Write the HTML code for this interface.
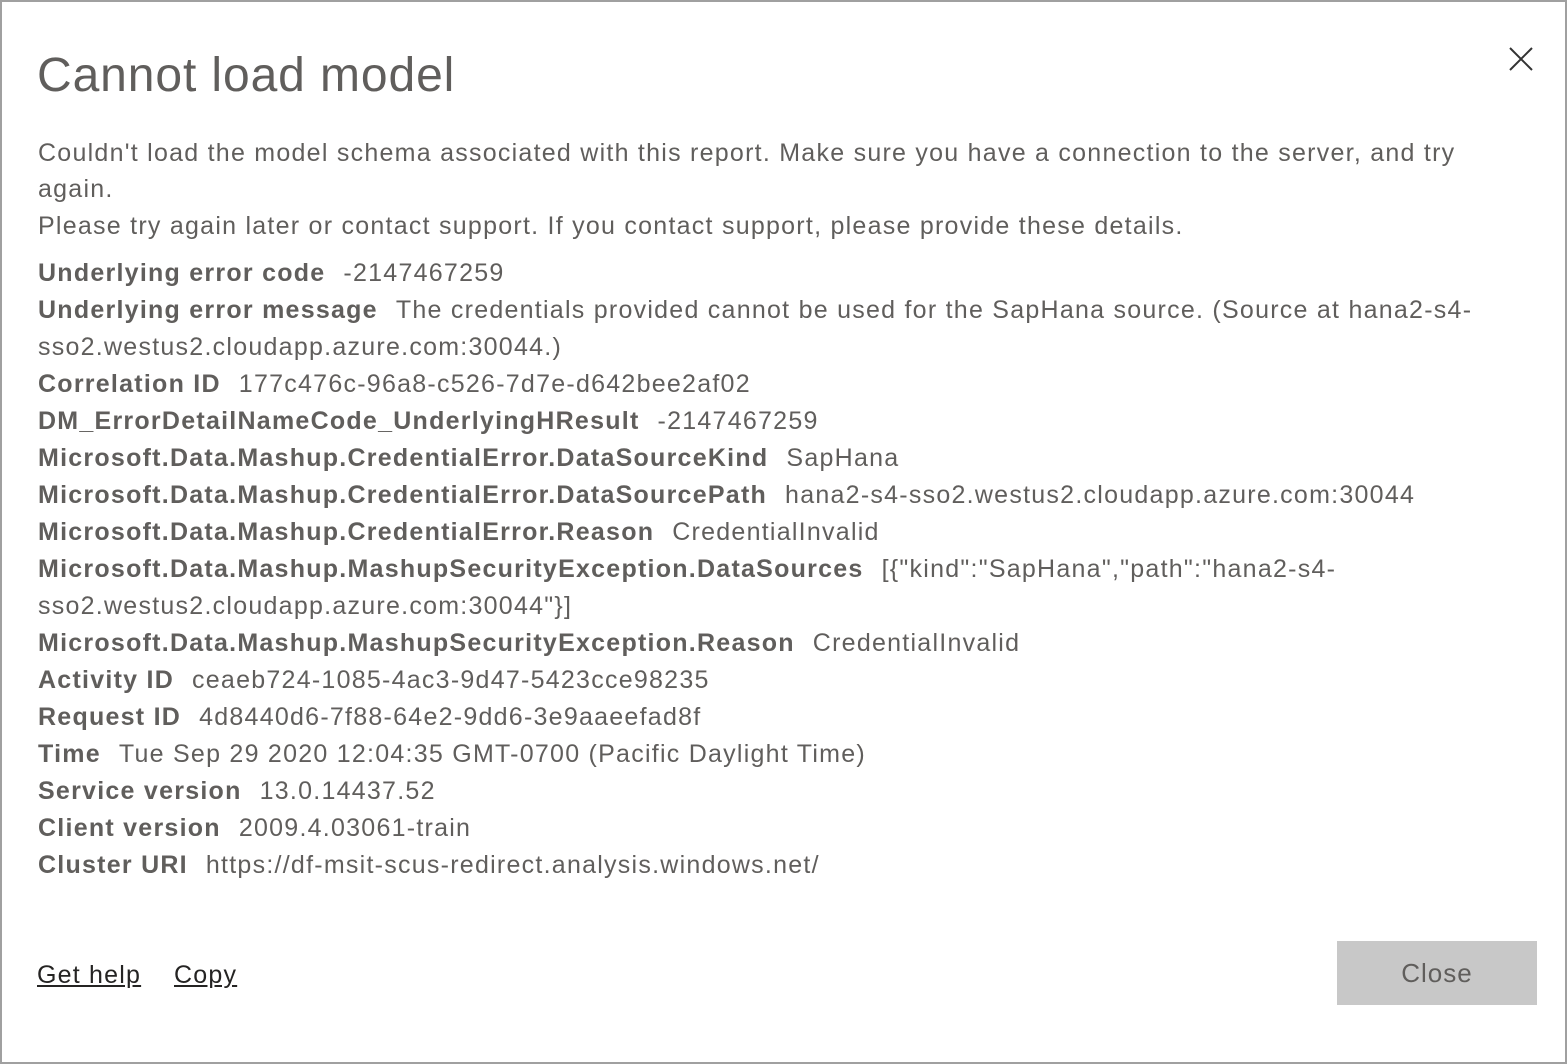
<!DOCTYPE html>
<html><head><meta charset="utf-8"><style>
html,body{margin:0;padding:0;}
body{width:1567px;height:1064px;position:relative;overflow:hidden;background:#fff;font-family:"Liberation Sans",sans-serif;color:#605e5c;}
.frame{position:absolute;left:0;top:0;width:1563px;height:1060px;border:2px solid #a0a0a0;}
.t{position:absolute;left:38px;font-size:25px;letter-spacing:1.25px;white-space:nowrap;line-height:30px;margin-top:1px;}
.t b{color:#605e5c;margin-right:18px;}
h1{position:absolute;left:37px;top:48px;margin:0;font-weight:normal;font-size:48px;letter-spacing:0.9px;line-height:56px;color:#605e5c;}
.x{position:absolute;left:1509px;top:47px;}
.link{position:absolute;top:961px;font-size:25px;letter-spacing:1.2px;text-decoration:underline;color:#252423;}
.btn{position:absolute;left:1337px;top:941px;width:200px;height:64px;background:#c8c8c8;color:#605e5c;font-size:26px;letter-spacing:1px;text-align:center;line-height:64px;}
</style></head><body>
<div class="frame"></div>
<h1>Cannot load model</h1>
<svg class="x" width="24" height="24" viewBox="0 0 24 24"><path d="M1 1L23 23M23 1L1 23" stroke="#333" stroke-width="2" fill="none"/></svg>
<div class="t" style="top:137px">Couldn't load the model schema associated with this report. Make sure you have a connection to the server, and try</div>
<div class="t" style="top:173px">again.</div>
<div class="t" style="top:210px">Please try again later or contact support. If you contact support, please provide these details.</div>
<div class="t" style="top:257px"><b>Underlying error code</b>-2147467259</div>
<div class="t" style="top:294px"><b>Underlying error message</b>The credentials provided cannot be used for the SapHana source. (Source at hana2-s4-</div>
<div class="t" style="top:331px">sso2.westus2.cloudapp.azure.com:30044.)</div>
<div class="t" style="top:368px"><b>Correlation ID</b>177c476c-96a8-c526-7d7e-d642bee2af02</div>
<div class="t" style="top:405px"><b>DM_ErrorDetailNameCode_UnderlyingHResult</b>-2147467259</div>
<div class="t" style="top:442px"><b>Microsoft.Data.Mashup.CredentialError.DataSourceKind</b>SapHana</div>
<div class="t" style="top:479px"><b>Microsoft.Data.Mashup.CredentialError.DataSourcePath</b>hana2-s4-sso2.westus2.cloudapp.azure.com:30044</div>
<div class="t" style="top:516px"><b>Microsoft.Data.Mashup.CredentialError.Reason</b>CredentialInvalid</div>
<div class="t" style="top:553px"><b>Microsoft.Data.Mashup.MashupSecurityException.DataSources</b>[{"kind":"SapHana","path":"hana2-s4-</div>
<div class="t" style="top:590px">sso2.westus2.cloudapp.azure.com:30044"}]</div>
<div class="t" style="top:627px"><b>Microsoft.Data.Mashup.MashupSecurityException.Reason</b>CredentialInvalid</div>
<div class="t" style="top:664px"><b>Activity ID</b>ceaeb724-1085-4ac3-9d47-5423cce98235</div>
<div class="t" style="top:701px"><b>Request ID</b>4d8440d6-7f88-64e2-9dd6-3e9aaeefad8f</div>
<div class="t" style="top:738px"><b>Time</b>Tue Sep 29 2020 12:04:35 GMT-0700 (Pacific Daylight Time)</div>
<div class="t" style="top:775px"><b>Service version</b>13.0.14437.52</div>
<div class="t" style="top:812px"><b>Client version</b>2009.4.03061-train</div>
<div class="t" style="top:849px"><b>Cluster URI</b>https://df-msit-scus-redirect.analysis.windows.net/</div>
<div class="link" style="left:37px">Get help</div>
<div class="link" style="left:174px">Copy</div>
<div class="btn">Close</div>
</body></html>
